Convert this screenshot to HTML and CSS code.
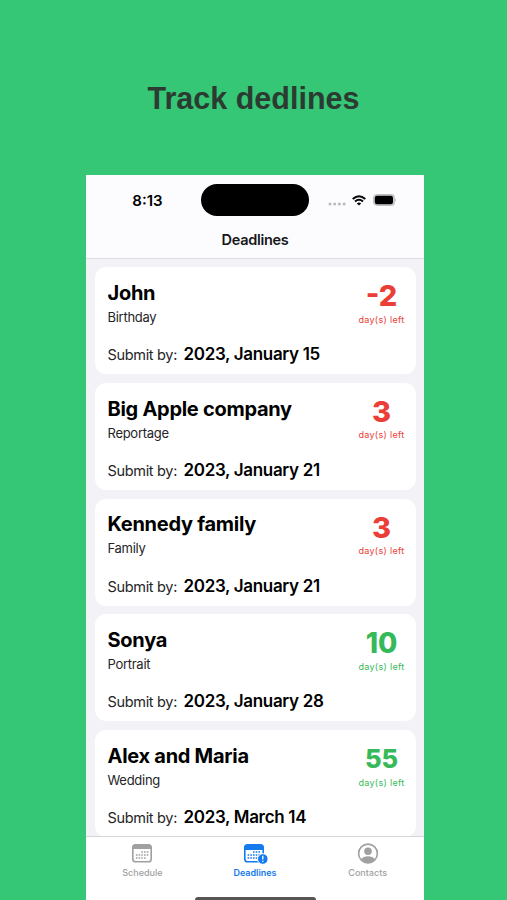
FILE: index.html
```html
<!DOCTYPE html>
<html lang="en">
<head>
<meta charset="utf-8">
<title>Deadlines</title>
<link rel="stylesheet" href="styles.css">
</head>
<body>
<h1 class="headline">Track dedlines</h1>
<main class="phone">
  <header class="top">
    <div class="status">
      <span class="time">8:13</span>
      <span class="island"></span>
      <div class="signals">
        <svg class="dots" width="18" height="4" viewBox="0 0 18 4" fill="#b9b9bc"><circle cx="2" cy="2" r="1.5"/><circle cx="6.7" cy="2" r="1.5"/><circle cx="11.4" cy="2" r="1.5"/><circle cx="16.1" cy="2" r="1.5"/></svg>
        <svg class="wifi" width="14" height="11" viewBox="0 0 14 11" fill="none" stroke="#080808" stroke-width="2"><path d="M.7 4.1Q7-1.7 13.3 4.1M3 6.5Q7 3 11 6.5"/><path d="M7 10.6 4.8 8.4Q7 6.6 9.2 8.4Z" fill="#080808" stroke="none"/></svg>
        <svg class="battery" width="24" height="12" viewBox="0 0 24 12"><rect x=".6" y=".6" width="20.8" height="10.8" rx="3.4" fill="#d0d0d2" stroke="#c0c0c2" stroke-width="1.1"/><rect x="1.8" y="1.8" width="18.2" height="8.4" rx="2.2" fill="#000"/><path d="M22.5 4.2q1.5 1.8 0 3.6z" fill="#a5a5a7"/></svg>
      </div>
    </div>
    <h2 class="title">Deadlines</h2>
  </header>
  <section class="list">
    <article class="card">
      <div class="info"><h3 class="name">John</h3><p class="kind">Birthday</p><p class="due"><span class="label">Submit by:</span><span class="date">2023, January 15</span></p></div>
      <div class="left late"><strong class="count wide">-2</strong><span class="unit">day(s) left</span></div>
    </article>
    <article class="card">
      <div class="info"><h3 class="name">Big Apple company</h3><p class="kind">Reportage</p><p class="due"><span class="label">Submit by:</span><span class="date">2023, January 21</span></p></div>
      <div class="left late"><strong class="count wide">3</strong><span class="unit">day(s) left</span></div>
    </article>
    <article class="card">
      <div class="info"><h3 class="name">Kennedy family</h3><p class="kind">Family</p><p class="due"><span class="label">Submit by:</span><span class="date">2023, January 21</span></p></div>
      <div class="left late"><strong class="count wide">3</strong><span class="unit">day(s) left</span></div>
    </article>
    <article class="card">
      <div class="info"><h3 class="name">Sonya</h3><p class="kind">Portrait</p><p class="due"><span class="label">Submit by:</span><span class="date">2023, January 28</span></p></div>
      <div class="left"><strong class="count">10</strong><span class="unit">day(s) left</span></div>
    </article>
    <article class="card">
      <div class="info"><h3 class="name">Alex and Maria</h3><p class="kind">Wedding</p><p class="due"><span class="label">Submit by:</span><span class="date">2023, March 14</span></p></div>
      <div class="left"><strong class="count small">55</strong><span class="unit">day(s) left</span></div>
    </article>
  </section>
  <footer class="bottom">
    <nav class="tabs">
      <a class="tab">
        <svg width="26" height="22" viewBox="0 0 26 22"><rect x="3.8" y="1.8" width="18.4" height="16.9" rx="2.8" fill="none" stroke="currentColor" stroke-width="1.6"/><path d="M3.5 6V4.5Q3.5 1.5 6.5 1.5h13q3 0 3 3V6z" fill="currentColor"/><path d="M12.3 9h8M6.9 12h13.4M6.9 15h10.4" stroke="currentColor" stroke-width="1.6" stroke-dasharray="1.6 1.1"/></svg>
        <span>Schedule</span>
      </a>
      <a class="tab active">
        <svg width="26" height="22" viewBox="0 0 26 22"><rect x="2.8" y="1.8" width="18.4" height="16.9" rx="2.8" fill="none" stroke="currentColor" stroke-width="1.6"/><path d="M2.5 7V4.5Q2.5 1.5 5.5 1.5h13q3 0 3 3V7z" fill="currentColor"/><path d="M11 9h8M5.6 12h13.4M5.6 15h10.4" stroke="currentColor" stroke-width="1.6" stroke-dasharray="1.6 1.1"/><circle cx="20.8" cy="16" r="5.3" fill="currentColor" stroke="#fff" stroke-width="1"/><path d="M20.8 12.8v3.8M20.8 17.7v1.4" stroke="#fff" stroke-width="1.3"/></svg>
        <span>Deadlines</span>
      </a>
      <a class="tab">
        <svg width="26" height="22" viewBox="0 0 26 22"><circle cx="13" cy="10.5" r="9.4" fill="none" stroke="currentColor" stroke-width="1.6"/><circle cx="13" cy="8.3" r="3.8" fill="currentColor"/><path d="M6 16.2Q8.4 13.3 13 13.3T20 16.2Q17 19.5 13 19.5T6 16.2z" fill="currentColor"/></svg>
        <span>Contacts</span>
      </a>
    </nav>
    <div class="home"></div>
  </footer>
</main>
</body>
</html>
```

FILE: styles.css
```css
* { box-sizing: border-box; margin: 0; padding: 0; }
body {
  width: 507px;
  height: 900px;
  overflow: hidden;
  background: #35c775;
  font-family: Inter, "Liberation Sans", sans-serif;
  display: flex;
  flex-direction: column;
  align-items: center;
}
.headline {
  flex: none;
  height: 175px;
  padding-top: 80px;
  font: bold 30.5px/36px "Liberation Sans", Arial, sans-serif;
  color: #2b3b32;
}
.phone {
  width: 338px;
  height: 725px;
  margin-right: -3px;
  display: flex;
  flex-direction: column;
  background: #f2f2f7;
}
.top {
  flex: none;
  height: 84px;
  background: #fcfcfe;
  border-bottom: 1px solid #dedee2;
}
.status {
  height: 50px;
  display: grid;
  grid-template-columns: 115px 108px 115px;
  align-items: center;
}
.time {
  padding-left: 8px;
  text-align: center;
  font-size: 15px;
  font-weight: 600;
}
.island { height: 32px; border-radius: 16px; background: #000; }
.signals { display: flex; align-items: center; padding-left: 19px; }
.dots { margin-top: 7px; }
.wifi { margin-left: 6px; }
.battery { margin-left: 7px; }
.title {
  text-align: center;
  font-size: 14.5px;
  letter-spacing: -0.3px;
  line-height: 30px;
  font-weight: 600;
  color: #17171a;
}
.list {
  flex: 1;
  min-height: 0;
  overflow: hidden;
  padding: 8.4px 8.5px 0;
}
.card {
  height: 107px;
  margin-bottom: 8.7px;
  padding: 12px 11px 0 13px;
  border-radius: 11px;
  background: #fff;
  display: flex;
  justify-content: space-between;
}
.name { padding-top: 0.6px; font-size: 20px; line-height: 26px; font-weight: 700; letter-spacing: -0.28px; }
.kind { margin-top: 2px; font-size: 13px; line-height: 18px; letter-spacing: -0.28px; color: #242426; }
.due { display: flex; align-items: baseline; margin-top: 17.4px; line-height: 22px; }
.label { width: 76px; font-size: 14.5px; letter-spacing: -0.32px; color: #242426; }
.date { font-size: 17px; font-weight: 600; letter-spacing: -0.32px; }
.left {
  width: 46px;
  display: flex;
  flex-direction: column;
  align-items: center;
  color: #36ba59;
}
.late { color: #eb3e36; }
.count { font-size: 28px; line-height: 34px; font-weight: 800; }
.wide { font-size: 29px; font-weight: 800; }
.small { font-size: 25.5px; }
.unit { padding-top: 0.4px; font-size: 9px; line-height: 12px; letter-spacing: 0.32px; white-space: nowrap; }
.bottom {
  flex: none;
  height: 64px;
  display: flex;
  flex-direction: column;
  justify-content: space-between;
  align-items: center;
  background: #fff;
  border-top: 1px solid #d6d6d9;
}
.tabs { width: 100%; padding-top: 6px; display: grid; grid-template-columns: repeat(3, 1fr); }
.tab {
  display: flex;
  flex-direction: column;
  align-items: center;
  color: #a0a0a0;
  font-size: 9px;
  line-height: 12px;
  font-weight: 500;
}
.tab span { margin-top: 2px; }
.active { color: #147aed; font-weight: 600; }
.home { width: 121px; height: 3px; border-radius: 3px 3px 0 0; background: #555; }
```
